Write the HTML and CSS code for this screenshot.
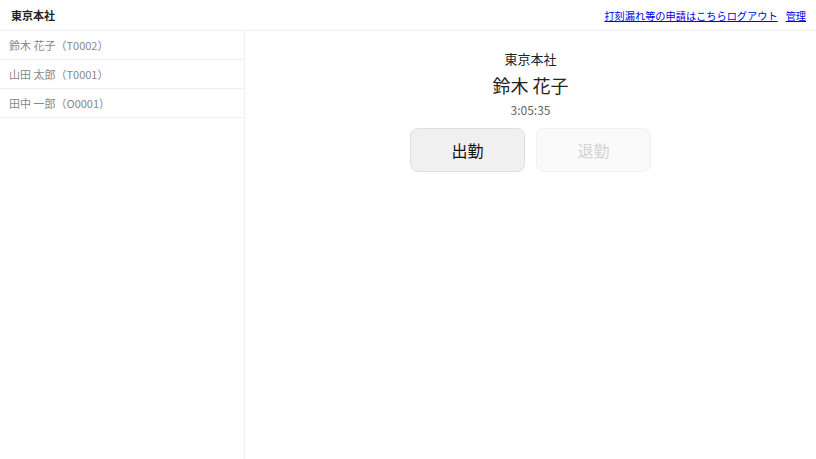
FILE: index.html
```html
<!DOCTYPE html>
<html lang="ja">
<head>
  <meta charset="UTF-8" />
  <meta name="viewport" content="width=device-width, initial-scale=1" />
  <title>勤怠打刻</title>
  <link rel="stylesheet" href="styles.css">
</head>
<body>
  <!-- header -->
  <header class="topbar">
    <div class="office">東京本社</div>
    <nav class="links">
      <a href="#">打刻漏れ等の申請はこちら</a><a href="#">ログアウト</a><a href="#" class="admin">管理</a>
    </nav>
  </header>

  <div class="layout">
    <!-- staff list -->
    <ul class="staff-list">
      <li class="staff">鈴木 花子（T0002）</li>
      <li class="staff">山田 太郎（T0001）</li>
      <li class="staff">田中 一郎（O0001）</li>
    </ul>

    <!-- punch panel -->
    <main class="panel">
      <div class="panel-office">東京本社</div>
      <div class="panel-name">鈴木 花子</div>
      <div class="panel-time">3:05:35</div>
      <div class="buttons">
        <button class="punch">出勤</button>
        <button class="punch" disabled>退勤</button>
      </div>
    </main>
  </div>
</body>
</html>
```

FILE: styles.css
```css
* {
  box-sizing: border-box;
}

body {
  margin: 0;
  font-family: "Noto Sans CJK JP", "Noto Sans", sans-serif;
  color: #222;
  background: #fff;
  height: 100vh;
  display: flex;
  flex-direction: column;
}

/* header */
.topbar {
  height: 31px;
  display: flex;
  align-items: center;
  justify-content: space-between;
  padding: 0 10px 0 11px;
  border-bottom: 1px solid #f0f0f0;
}

.office {
  font-size: 11px;
  font-weight: bold;
}

.links {
  font-size: 10.2px;
}

.links a {
  color: #0000ee;
}

.links .admin {
  margin-left: 8px;
}

/* main layout */
.layout {
  flex: 1;
  display: flex;
}

.staff-list {
  width: 245px;
  margin: 0;
  padding: 0;
  list-style: none;
  border-right: 1px solid #f0f0f0;
}

.staff {
  height: 29px;
  padding-left: 9px;
  display: flex;
  align-items: center;
  font-size: 11px;
  color: #888;
  border-bottom: 1px solid #f0f0f0;
}

/* punch panel */
.panel {
  flex: 1;
  display: flex;
  flex-direction: column;
  align-items: center;
  padding-top: 18px;
}

.panel-office {
  font-size: 13px;
  line-height: 20px;
}

.panel-name {
  font-size: 18px;
  line-height: 28px;
  margin-top: 2px;
}

.panel-time {
  font-size: 12px;
  line-height: 18px;
  color: #666;
  margin-top: 2px;
}

.buttons {
  display: flex;
  gap: 11px;
  margin-top: 9px;
}

.punch {
  width: 115px;
  height: 44px;
  font-family: inherit;
  font-size: 16px;
  color: #111;
  background: #f0f0f0;
  border: 1px solid #e0e0e0;
  border-radius: 8px;
  cursor: pointer;
}

.punch:disabled {
  color: #d4d4d4;
  background: #fafafa;
  border-color: #f0f0f0;
  cursor: default;
}
```
